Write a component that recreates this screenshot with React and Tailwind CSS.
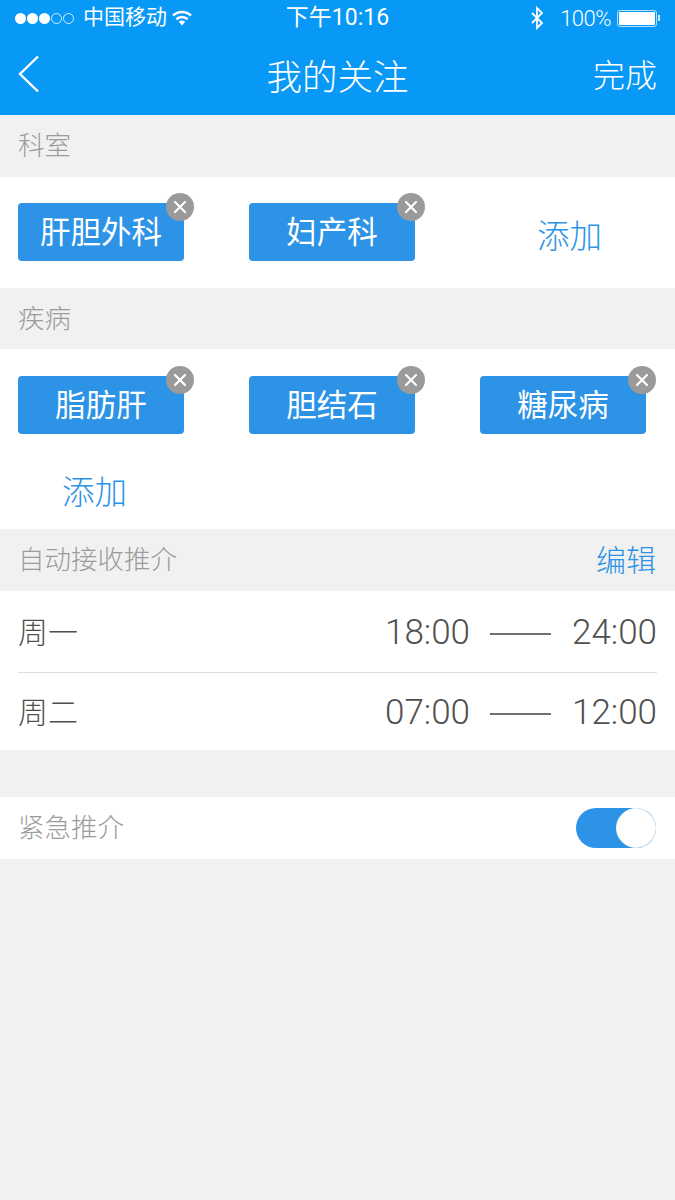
import React from 'react';

const font = "font-['Roboto','Noto_Sans_CJK_SC',sans-serif]";

function Chip({ label }) {
  return (
    <div className="relative w-[166px] h-[58px] rounded-[4px] bg-[#2d93e6] flex items-center justify-center pt-[2px] text-white text-[30.5px] leading-none font-normal">
      {label}
      <span className="absolute right-[-10px] top-[-10px] w-[28px] h-[28px] rounded-full bg-[#9a9a9a] flex items-center justify-center">
        <svg width="14" height="14" viewBox="0 0 14 14" fill="none" stroke="white" strokeWidth="2.2" strokeLinecap="round">
          <path d="M2 2l10 10M12 2L2 12" />
        </svg>
      </span>
    </div>
  );
}

function SectionTitle({ children, right, className }) {
  return (
    <div className={`pl-[18px] pr-[19px] flex items-center justify-between text-[26.5px] text-[#9b9b9b] font-light ${className}`}>
      <span>{children}</span>
      {right && <span className="text-[#2d93e6] text-[30px]">{right}</span>}
    </div>
  );
}

function TimeRow({ day, from, to, className }) {
  return (
    <div className={`flex items-center justify-between pt-[4px] text-[#505050] font-light ${className}`}>
      <span className="text-[30px] mb-[3px]">{day}</span>
      <div className="flex items-center text-[35px]">
        <span>{from}</span>
        <span className="w-[61px] h-[2px] bg-[#707070] mx-[20px]"></span>
        <span className="w-[86px] text-right">{to}</span>
      </div>
    </div>
  );
}

export default function App() {
  return (
    <div className={`${font} w-[675px] h-[1200px] bg-[#f1f1f1] overflow-hidden`}>
      {/* Header */}
      <div className="h-[115px] bg-[#0898f5] text-white flex flex-col">
        <div className="h-[36px] px-[15px] flex items-center justify-between text-[21px]">
          <div className="w-[210px] flex items-center">
            <div className="flex items-center gap-[1px]">
              <span className="w-[11px] h-[11px] rounded-full bg-white"></span>
              <span className="w-[11px] h-[11px] rounded-full bg-white"></span>
              <span className="w-[11px] h-[11px] rounded-full bg-white"></span>
              <span className="w-[11px] h-[11px] rounded-full border border-white/80"></span>
              <span className="w-[11px] h-[11px] rounded-full border border-white/80"></span>
            </div>
            <span className="ml-[9px]">中国移动</span>
            <svg className="ml-[5px]" width="20" height="16" viewBox="0 0 20 16" fill="none" stroke="white" strokeWidth="2.6">
              <path d="M1 5.5c5-4.6 13-4.6 18 0" />
              <path d="M4.4 9.2c3.2-3 8-3 11.2 0" />
              <path d="M10 15.5l3.2-3.7c-1.8-1.6-4.6-1.6-6.4 0z" fill="white" stroke="none" />
            </svg>
          </div>
          <span className="text-[23px]">下午10:16</span>
          <div className="w-[210px] flex items-center justify-end">
            <svg width="14" height="24" viewBox="0 0 14 22" fill="none" stroke="white" strokeWidth="1.8">
              <path d="M2 6l10 10-5 5V1l5 5L2 16" />
            </svg>
            <span className="ml-[16px] text-[22px] font-light tracking-[-0.5px]">100%</span>
            <div className="ml-[6px] flex items-center">
              <div className="w-[40px] h-[17px] rounded-[3px] border border-white/70 p-[1px]">
                <div className="w-full h-full bg-white rounded-[1px]"></div>
              </div>
              <span className="w-[2px] h-[6px] bg-white/80 ml-[1px]"></span>
            </div>
          </div>
        </div>
        <div className="flex-1 px-[18px] flex items-center justify-between relative">
          <svg width="22" height="38" viewBox="0 0 22 38" fill="none" stroke="white" strokeWidth="2.4" className="mb-[3px]">
            <path d="M20 1.5L2 19l18 17.5" />
          </svg>
          <span className="absolute left-0 right-0 pt-[6px] text-center text-[35.5px] font-light">我的关注</span>
          <span className="pt-[1px] text-[32px] font-light">完成</span>
        </div>
      </div>

      <SectionTitle className="h-[62px]">科室</SectionTitle>
      <div className="h-[111px] bg-white px-[18px] pt-[26px] grid grid-cols-[166px_166px_166px] gap-x-[65px]">
        <Chip label="肝胆外科" />
        <Chip label="妇产科" />
        <div className="h-[58px] pl-[57px] pt-[10px] flex items-center text-[32.5px] text-[#2d93e6] font-light">添加</div>
      </div>

      <SectionTitle className="h-[61px]">疾病</SectionTitle>
      <div className="h-[180px] bg-white px-[18px] pt-[27px]">
        <div className="grid grid-cols-[166px_166px_166px] gap-x-[65px]">
          <Chip label="脂肪肝" />
          <Chip label="胆结石" />
          <Chip label="糖尿病" />
        </div>
        <div className="mt-[39px] pl-[44px] text-[32.5px] leading-[40px] text-[#2d93e6] font-light">添加</div>
      </div>

      <SectionTitle right="编辑" className="h-[62px]">自动接收推介</SectionTitle>
      <div className="h-[159px] bg-white px-[18px] flex flex-col">
        <TimeRow day="周一" from="18:00" to="24:00" className="h-[81px]" />
        <div className="h-px bg-[#dddddd]"></div>
        <TimeRow day="周二" from="07:00" to="12:00" className="flex-1" />
      </div>

      <div className="h-[47px]"></div>

      <div className="h-[62px] bg-white pl-[18px] pr-[19px] flex items-center justify-between">
        <span className="text-[26.5px] text-[#9b9b9b] font-light">紧急推介</span>
        <div className="w-[80px] h-[40px] rounded-full bg-[#2d93e6] relative">
          <span className="absolute right-0 top-0 w-[40px] h-[40px] rounded-full bg-white border border-[#f4f4f4]"></span>
        </div>
      </div>
    </div>
  );
}
